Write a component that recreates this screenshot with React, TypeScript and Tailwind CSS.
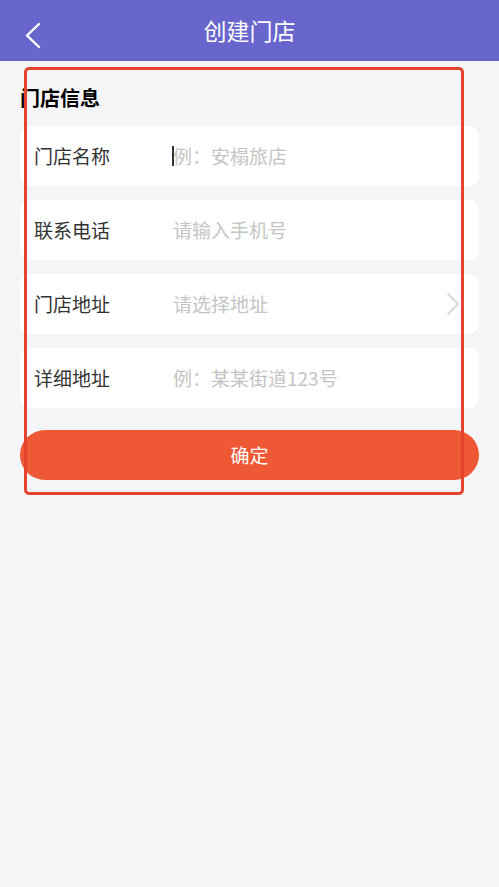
const rows = [
  { label: "门店名称", placeholder: "例：安榻旅店", caret: true },
  { label: "联系电话", placeholder: "请输入手机号" },
  { label: "门店地址", placeholder: "请选择地址", arrow: true },
  { label: "详细地址", placeholder: "例：某某街道123号" },
];

const App = () => {
  return (
    <div
      className="relative min-h-[887px] bg-[#f5f5f7]"
      style={{ fontFamily: '"Noto Sans CJK SC", "Noto Sans", sans-serif' }}
    >
      {/* header */}
      <div className="relative flex h-[61px] items-center justify-center bg-[#6866cc]">
        <button className="absolute left-[20px] top-[17px] p-1">
          <svg width="20" height="28" viewBox="0 0 20 28" fill="none">
            <polyline
              points="15,3 3,14.5 15,26"
              stroke="white"
              strokeWidth="2.4"
              strokeLinecap="round"
              strokeLinejoin="round"
            />
          </svg>
        </button>
        <h1 className="text-[23px] leading-none text-white">创建门店</h1>
      </div>

      <div className="px-5">
        <p className="mt-[23px] text-[20px] font-bold leading-[28px] text-black">门店信息</p>

        <div className="mt-[14px] flex flex-col gap-[14px]">
          {rows.map((row) => (
            <div
              key={row.label}
              className="flex h-[60px] items-center rounded-[10px] bg-white pl-[14px] pr-[20px]"
            >
              <span className="w-[139px] shrink-0 text-[19px] text-[#333333]">{row.label}</span>
              <div className="relative flex flex-1 items-center">
                {row.caret && <span className="absolute -left-[1px] h-[20px] w-[1.5px] bg-[#333]" />}
                <span className="text-[19px] text-[#c4c4c4]">{row.placeholder}</span>
              </div>
              {row.arrow && (
                <svg width="12" height="22" viewBox="0 0 12 22" fill="none">
                  <polyline
                    points="1,1 11,11 1,21"
                    stroke="#c8c8c8"
                    strokeWidth="1.4"
                    strokeLinecap="round"
                    strokeLinejoin="round"
                  />
                </svg>
              )}
            </div>
          ))}
        </div>

        <button className="mt-[22px] flex h-[50px] w-full items-center justify-center rounded-full bg-[#ee5835] text-[19px] text-white">
          确定
        </button>
      </div>

      {/* annotation frame */}
      <div className="pointer-events-none absolute left-[24px] top-[67px] h-[428px] w-[440px] rounded-[5px] border-[3px] border-[#e4432d]" />
    </div>
  );
};

export default App;
